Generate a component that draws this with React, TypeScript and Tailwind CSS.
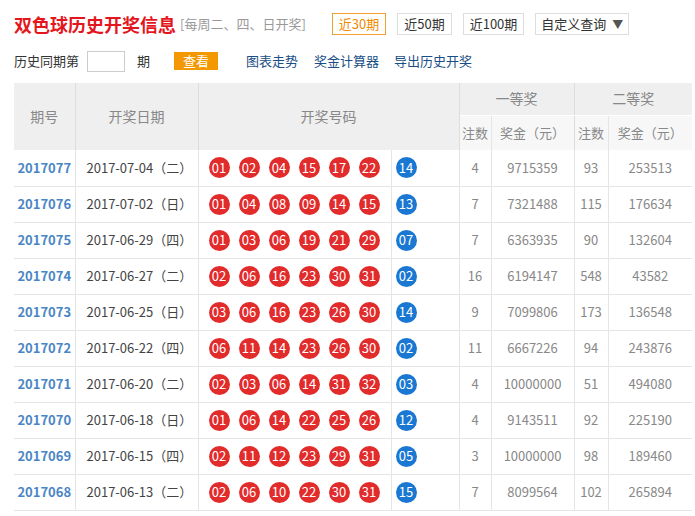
import React from "react";

const rows: [string, string, string[], string, string, string, string, string][] = [
  ["2017077", "2017-07-04（二）", ["01","02","04","15","17","22"], "14", "4", "9715359", "93", "253513"],
  ["2017076", "2017-07-02（日）", ["01","04","08","09","14","15"], "13", "7", "7321488", "115", "176634"],
  ["2017075", "2017-06-29（四）", ["01","03","06","19","21","29"], "07", "7", "6363935", "90", "132604"],
  ["2017074", "2017-06-27（二）", ["02","06","16","23","30","31"], "02", "16", "6194147", "548", "43582"],
  ["2017073", "2017-06-25（日）", ["03","06","16","23","26","30"], "14", "9", "7099806", "173", "136548"],
  ["2017072", "2017-06-22（四）", ["06","11","14","23","26","30"], "02", "11", "6667226", "94", "243876"],
  ["2017071", "2017-06-20（二）", ["02","03","06","14","31","32"], "03", "4", "10000000", "51", "494080"],
  ["2017070", "2017-06-18（日）", ["01","06","14","22","25","26"], "12", "4", "9143511", "92", "225190"],
  ["2017069", "2017-06-15（四）", ["02","11","12","23","29","31"], "05", "3", "10000000", "98", "189460"],
  ["2017068", "2017-06-13（二）", ["02","06","10","22","30","31"], "15", "7", "8099564", "102", "265894"],
];

const font = { fontFamily: '"Microsoft YaHei","Noto Sans CJK SC",Arial,sans-serif' };

function Ball({ n, blue }: { n: string; blue?: boolean }) {
  return (
    <span className={`inline-flex w-[21px] h-[21px] rounded-full items-center justify-center text-white text-[13px] ${blue ? "bg-[#1a78d2]" : "bg-[#e22b2b]"}`}>{n}</span>
  );
}

export default function App() {
  return (
    <div className="w-[695px] h-[516px] overflow-hidden bg-white text-[#333]" style={font}>
      <div className="flex items-center h-[48px] pl-[14px]">
        <span className="text-[#e4161d] font-bold text-[18px]">双色球历史开奖信息</span>
        <span className="text-[#999] text-[13px] ml-[4px]">[每周二、四、日开奖]</span>
        <span className="ml-[26px] border border-[#f0a030] text-[#f08a00] text-[13px] px-[6px] h-[22px] flex items-center">近30期</span>
        <span className="ml-[11px] border border-[#ddd] text-[13px] px-[6px] h-[22px] flex items-center">近50期</span>
        <span className="ml-[11px] border border-[#ddd] text-[13px] px-[6px] h-[22px] flex items-center">近100期</span>
        <span className="ml-[11px] border border-[#ddd] text-[13px] px-[5px] h-[22px] flex items-center gap-[6px]">自定义查询<span className="text-[#555] text-[11px]">▼</span></span>
      </div>
      <div className="flex items-center h-[26px] pl-[14px] text-[13px]">
        <span>历史同期第</span>
        <span className="ml-[8px] h-[21px] border border-[#ccc] w-[38px]"></span>
        <span className="ml-[12px]">期</span>
        <span className="ml-[24px] bg-[#f39800] text-white px-[9px] h-[18px] flex items-center">查看</span>
        <span className="ml-[28px] text-[#1a4f85]">图表走势</span>
        <span className="ml-[16px] text-[#1a4f85]">奖金计算器</span>
        <span className="ml-[15px] text-[#1a4f85]">导出历史开奖</span>
      </div>
      <table className="ml-[14px] mt-[9px] border-collapse text-[13px]" style={{ width: 678, tableLayout: "fixed" }}>
        <colgroup>
          <col style={{ width: 61 }} /><col style={{ width: 123 }} /><col style={{ width: 193 }} /><col style={{ width: 68 }} />
          <col style={{ width: 32 }} /><col style={{ width: 83 }} /><col style={{ width: 34 }} /><col style={{ width: 84 }} />
        </colgroup>
        <thead className="text-[#888] text-[14px] font-normal">
          <tr className="h-[32px] bg-[#efefef]">
            <th rowSpan={2} className="font-normal border-r border-[#ddd]">期号</th>
            <th rowSpan={2} className="font-normal border-r border-[#ddd]">开奖日期</th>
            <th rowSpan={2} colSpan={2} className="font-normal border-r border-[#ddd]">开奖号码</th>
            <th colSpan={2} className="font-normal border-r border-[#ddd] border-b border-b-white">一等奖</th>
            <th colSpan={2} className="font-normal border-b border-white">二等奖</th>
          </tr>
          <tr className="h-[35px] text-[13px]">
            <th className="font-normal bg-[#f7f7f7] border-r border-[#e5e5e5]">注数</th>
            <th className="font-normal bg-[#f7f7f7] border-r border-[#ddd]">奖金（元）</th>
            <th className="font-normal bg-[#f7f7f7] border-r border-[#e5e5e5]">注数</th>
            <th className="font-normal bg-[#f7f7f7]">奖金（元）</th>
          </tr>
        </thead>
        <tbody>
          {rows.map((r) => (
            <tr key={r[0]} className="h-[36px] border-b border-[#e5e5e5]">
              <td className="text-center text-[#4a86c5] font-bold border-r border-[#e5e5e5]">{r[0]}</td>
              <td className="pl-[11px] text-[#444] border-r border-[#e5e5e5]">{r[1]}</td>
              <td className="pl-[10px] border-r border-[#e5e5e5]">
                <div className="flex gap-[9px]">{r[2].map((n, i) => <Ball key={i} n={n} />)}</div>
              </td>
              <td className="pl-[4px] border-r border-[#e5e5e5]"><Ball n={r[3]} blue /></td>
              <td className="text-center text-[#888] border-r border-[#e5e5e5]">{r[4]}</td>
              <td className="text-center text-[#888] border-r border-[#e5e5e5]">{r[5]}</td>
              <td className="text-center text-[#888] border-r border-[#e5e5e5]">{r[6]}</td>
              <td className="text-center text-[#888]">{r[7]}</td>
            </tr>
          ))}
        </tbody>
      </table>
    </div>
  );
}
